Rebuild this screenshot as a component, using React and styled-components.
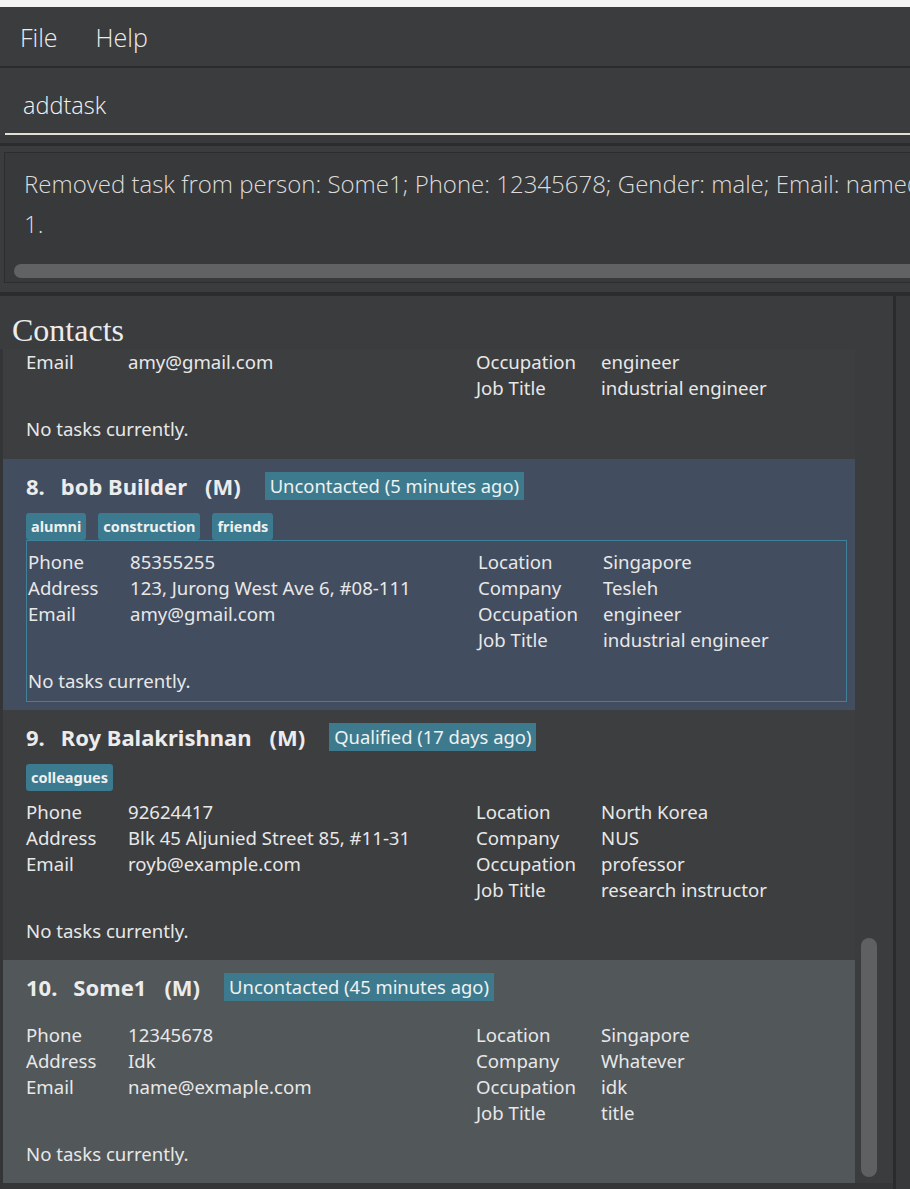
import React from 'react';
import styled, { createGlobalStyle } from 'styled-components';

const GlobalStyle = createGlobalStyle`
  html, body {
    margin: 0;
    padding: 0;
    background: #3b3c3e;
    overflow: hidden;
  }
  body {
    font-family: "Noto Sans", "Open Sans", sans-serif;
    color: #e6e6e6;
  }
`;

const Window = styled.div`
  width: 910px;
  height: 1189px;
  display: flex;
  flex-direction: column;
  background: #3b3c3e;
  overflow: hidden;
`;

const TitleStrip = styled.div`
  height: 7px;
  flex-shrink: 0;
  background: #f3f3f3;
`;

const MenuBar = styled.div`
  height: 59px;
  flex-shrink: 0;
  display: flex;
  align-items: center;
  gap: 38px;
  padding-left: 20px;
  background: #3b3c3e;
  border-bottom: 2px solid #2b2c2d;
`;

const MenuItem = styled.span`
  font-family: "Open Sans", sans-serif;
  font-weight: 300;
  font-size: 25px;
  color: #ececec;
`;

const CommandBox = styled.div`
  height: 67px;
  flex-shrink: 0;
  display: flex;
  align-items: flex-end;
  margin-left: 5px;
  padding: 0 0 12px 18px;
  box-sizing: border-box;
  border-bottom: 2px solid #e2e0d2;
  font-family: "Open Sans", sans-serif;
  font-weight: 300;
  font-size: 23.5px;
  color: #f2f2f2;
`;

const Gap = styled.div`
  height: 8px;
  flex-shrink: 0;
  background: #38393a;
  border-bottom: 3px solid #2b2c2d;
`;

const ResultSection = styled.div`
  flex-shrink: 0;
  padding: 6px 0 9px 4px;
  background: #3b3c3e;
  border-bottom: 4px solid #2b2c2d;
`;

const ResultBox = styled.div`
  height: 129px;
  display: flex;
  flex-direction: column;
  border: 1px solid #2c2d2e;
  border-right: none;
  background: #38393a;
  overflow: hidden;
`;

const ResultText = styled.div`
  padding: 11px 0 0 19px;
  font-family: "Open Sans", sans-serif;
  font-weight: 300;
  font-size: 24px;
  line-height: 40px;
  color: #dcdcdc;
  white-space: nowrap;
`;

const HScroll = styled.div`
  margin: auto 0 4px 9px;
  width: 940px;
  height: 14px;
  flex-shrink: 0;
  border-radius: 7px;
  background: #616263;
`;

const ContactsPanel = styled.div`
  flex: 1;
  min-height: 0;
  display: flex;
`;

const ListColumn = styled.div`
  width: 893px;
  display: flex;
  flex-direction: column;
  background: #3b3c3e;
`;

const PanelTitle = styled.div`
  height: 53px;
  flex-shrink: 0;
  display: flex;
  align-items: flex-end;
  padding-left: 12px;
  box-sizing: border-box;
  font-family: "Liberation Serif", "Times New Roman", serif;
  font-size: 32px;
  line-height: 37px;
  color: #ececec;
`;

const ListBody = styled.div`
  flex: 1;
  min-height: 0;
  display: flex;
  border-left: 3px solid #343536;
  border-bottom: 6px solid #353637;
`;

const Viewport = styled.div`
  width: 852px;
  display: flex;
  flex-direction: column;
  overflow: hidden;
`;

const ScrollTrack = styled.div`
  width: 22px;
  padding-left: 6px;
  box-sizing: border-box;
`;

const Thumb = styled.div`
  width: 16px;
  border-radius: 8px;
  background: #5f6061;
`;

const Divider = styled.div`
  width: 3px;
  background: #2a2b2c;
`;

const SidePane = styled.div`
  flex: 1;
  background: #38393a;
`;

const cardColors = {
  plain: '#3c3e40',
  selected: '#424d5f',
  light: '#52575a',
};

const Card = styled.div`
  flex-shrink: 0;
  display: flex;
  flex-direction: column;
  padding: ${(p) => (p.$partial ? '0' : '13px')} 8px ${(p) => p.$bottom}px 23px;
  background: ${(p) => cardColors[p.$tone]};
  font-size: 18.6px;
  color: #e8e8e8;
`;

const CardHeader = styled.div`
  display: flex;
  align-items: center;
  height: 28px;
  margin-bottom: 13px;
  font-weight: 700;
  font-size: 22px;
  color: #ececec;
`;

const Index = styled.span`
  margin-right: 16px;
`;

const Name = styled.span`
  margin-right: 18px;
`;

const Gender = styled.span`
  margin-right: 24px;
`;

const Badge = styled.span`
  height: 28px;
  line-height: 28px;
  padding: 0 5px;
  background: #3e7a8d;
  font-weight: 400;
  font-size: 18.4px;
  color: #eef2f3;
`;

const TagRow = styled.div`
  display: flex;
  gap: 12px;
`;

const Tag = styled.span`
  height: 27px;
  line-height: 27px;
  padding: 0 5px;
  border-radius: 3px;
  background: #3c7a8f;
  font-weight: 700;
  font-size: 14.5px;
  color: #f0f0f0;
`;

const DetailBox = styled.div`
  ${(p) =>
    p.$selected
      ? 'border: 1px solid #3e8199; padding: 8px 1px 7px;'
      : `margin-top: ${p.$partial ? 0 : 8}px;`}
`;

const Fields = styled.div`
  display: grid;
  grid-template-columns: 450px 1fr;
`;

const FieldColumn = styled.div`
  display: grid;
  grid-template-columns: ${(p) => p.$label}px 1fr;
  align-content: start;
  line-height: 26px;
  white-space: nowrap;
`;

const NoTasks = styled.div`
  margin-top: 15px;
  line-height: 26px;
`;

const people = [
  {
    partial: true,
    tone: 'plain',
    bottom: 17,
    left: [['Email', 'amy@gmail.com']],
    right: [
      ['Occupation', 'engineer'],
      ['Job Title', 'industrial engineer'],
    ],
  },
  {
    index: '8.',
    name: 'bob Builder',
    status: 'Uncontacted (5 minutes ago)',
    tags: ['alumni', 'construction', 'friends'],
    tone: 'selected',
    selected: true,
    bottom: 8,
    left: [
      ['Phone', '85355255'],
      ['Address', '123, Jurong West Ave 6, #08-111'],
      ['Email', 'amy@gmail.com'],
    ],
    right: [
      ['Location', 'Singapore'],
      ['Company', 'Tesleh'],
      ['Occupation', 'engineer'],
      ['Job Title', 'industrial engineer'],
    ],
  },
  {
    index: '9.',
    name: 'Roy Balakrishnan',
    status: 'Qualified (17 days ago)',
    tags: ['colleagues'],
    tone: 'plain',
    bottom: 16,
    left: [
      ['Phone', '92624417'],
      ['Address', 'Blk 45 Aljunied Street 85, #11-31'],
      ['Email', 'royb@example.com'],
    ],
    right: [
      ['Location', 'North Korea'],
      ['Company', 'NUS'],
      ['Occupation', 'professor'],
      ['Job Title', 'research instructor'],
    ],
  },
  {
    index: '10.',
    name: 'Some1',
    status: 'Uncontacted (45 minutes ago)',
    tags: [],
    tone: 'light',
    bottom: 16,
    left: [
      ['Phone', '12345678'],
      ['Address', 'Idk'],
      ['Email', 'name@exmaple.com'],
    ],
    right: [
      ['Location', 'Singapore'],
      ['Company', 'Whatever'],
      ['Occupation', 'idk'],
      ['Job Title', 'title'],
    ],
  },
];

const FieldList = ({ rows, label }) => (
  <FieldColumn $label={label}>
    {rows.map(([k, v]) => (
      <React.Fragment key={k}>
        <span>{k}</span>
        <span>{v}</span>
      </React.Fragment>
    ))}
  </FieldColumn>
);

const PersonCard = ({ person }) => (
  <Card $tone={person.tone} $bottom={person.bottom} $partial={person.partial}>
    {!person.partial && (
      <>
        <CardHeader>
          <Index>{person.index}</Index>
          <Name>{person.name}</Name>
          <Gender>(M)</Gender>
          <Badge>{person.status}</Badge>
        </CardHeader>
        <TagRow>
          {person.tags.map((t) => (
            <Tag key={t}>{t}</Tag>
          ))}
        </TagRow>
      </>
    )}
    <DetailBox $selected={person.selected} $partial={person.partial}>
      <Fields>
        <FieldList rows={person.left} label={102} />
        <FieldList rows={person.right} label={125} />
      </Fields>
      <NoTasks>No tasks currently.</NoTasks>
    </DetailBox>
  </Card>
);

export default function App() {
  return (
    <Window>
      <GlobalStyle />
      <TitleStrip />
      <MenuBar>
        <MenuItem>File</MenuItem>
        <MenuItem>Help</MenuItem>
      </MenuBar>
      <CommandBox>addtask</CommandBox>
      <Gap />
      <ResultSection>
        <ResultBox>
          <ResultText>
            <div>Removed task from person: Some1; Phone: 12345678; Gender: male; Email: name@</div>
            <div>1.</div>
          </ResultText>
          <HScroll />
        </ResultBox>
      </ResultSection>
      <ContactsPanel>
        <ListColumn>
          <PanelTitle>Contacts</PanelTitle>
          <ListBody>
            <Viewport>
              {people.map((p, i) => (
                <PersonCard key={i} person={p} />
              ))}
            </Viewport>
            <ScrollTrack>
              <Thumb style={{ marginTop: 589, height: 239 }} />
            </ScrollTrack>
          </ListBody>
        </ListColumn>
        <Divider />
        <SidePane />
      </ContactsPanel>
    </Window>
  );
}
